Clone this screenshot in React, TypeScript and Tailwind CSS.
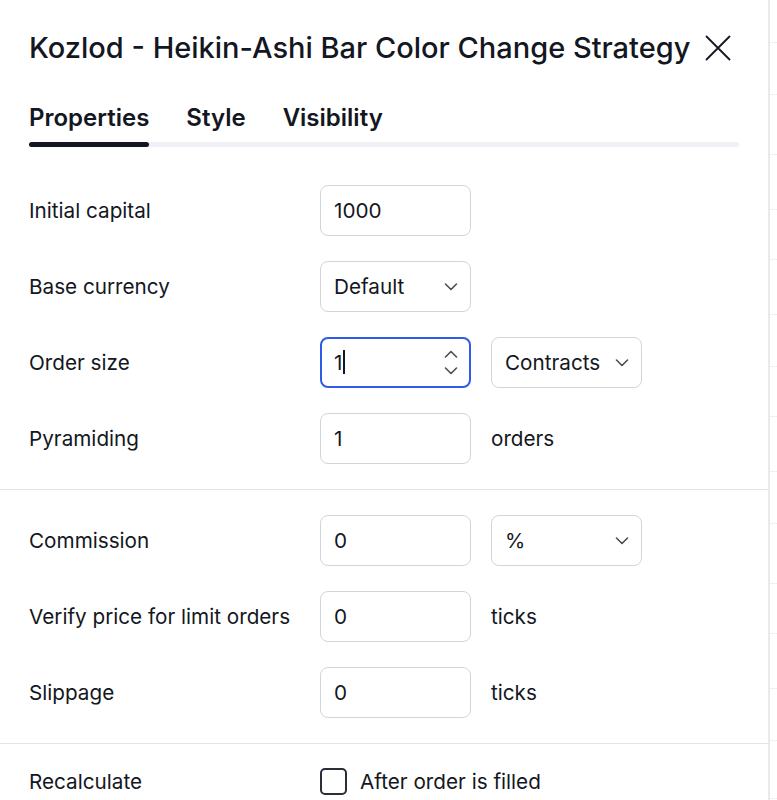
import React from "react";

const Chevron = ({ up = false }: { up?: boolean }) => (
  <svg width="14" height="8" viewBox="0 0 14 8" fill="none">
    <path
      d={up ? "M1.5 7L7 1.5L12.5 7" : "M1.5 1L7 6.5L12.5 1"}
      stroke="#4a4e59"
      strokeWidth="1.6"
      strokeLinecap="round"
      strokeLinejoin="round"
    />
  </svg>
);

const Row = ({ label, children }: { label: string; children: React.ReactNode }) => (
  <div className="flex items-center h-[51px]">
    <div className="w-[291px] text-[20.7px] text-[#131722]">{label}</div>
    <div className="flex items-center gap-[20px]">{children}</div>
  </div>
);

const Input = ({ value }: { value: string }) => (
  <div className="w-[151px] h-[51px] rounded-[8px] border border-[#d1d4dc] flex items-center px-[13px] text-[20.7px] text-[#131722]">
    {value}
  </div>
);

const Select = ({ value }: { value: string }) => (
  <div className="w-[151px] h-[51px] rounded-[8px] border border-[#d1d4dc] flex items-center justify-between pl-[13px] pr-[12px] text-[20.7px] text-[#131722]">
    <span>{value}</span>
    <Chevron />
  </div>
);

const Unit = ({ text }: { text: string }) => (
  <span className="text-[20.7px] text-[#131722]">{text}</span>
);

export default function App() {
  const lines = [43, 52, 60, 55, 50, 55, 52, 50, 55, 52, 60, 50, 55, 52, 58];
  return (
    <div
      className="w-[777px] h-[800px] flex bg-white overflow-hidden"
      style={{ fontFamily: "Inter, 'Noto Sans', sans-serif" }}
    >
      <div className="w-[770px] shrink-0 border-r-2 border-[#e9eaee] flex flex-col">
        <div className="pl-[29px] pr-[37px] pt-[28px] flex items-center justify-between">
          <h1 className="text-[29px] leading-[40px] font-medium text-[#131722]">
            Kozlod - Heikin-Ashi Bar Color Change Strategy
          </h1>
          <svg width="26" height="26" viewBox="0 0 26 26" fill="none">
            <path d="M1.5 1.5L24.5 24.5M24.5 1.5L1.5 24.5" stroke="#131722" strokeWidth="1.8" strokeLinecap="round" />
          </svg>
        </div>

        <div className="pl-[29px] pr-[29px] mt-[35px]">
          <div className="flex gap-[37px] text-[24px] leading-[30px] font-semibold text-[#131722]">
            <span>Properties</span>
            <span>Style</span>
            <span>Visibility</span>
          </div>
          <div className="mt-[9px] h-[5px] rounded-full bg-[#f0f1f7] flex">
            <div className="w-[120px] h-[5px] rounded-full bg-[#131722]" />
          </div>
        </div>

        <div className="pl-[29px] mt-[38px] flex flex-col gap-[25px]">
          <Row label="Initial capital">
            <Input value="1000" />
          </Row>
          <Row label="Base currency">
            <Select value="Default" />
          </Row>
          <Row label="Order size">
            <div className="w-[151px] h-[51px] rounded-[8px] border-2 border-[#2f5be6] flex items-center justify-between pl-[12px] pr-[11px] text-[20.7px] text-[#131722]">
              <span className="flex items-center">
                1<span className="inline-block w-[1.5px] h-[24px] bg-[#131722] ml-[1px]" />
              </span>
              <div className="flex flex-col gap-[9px]">
                <Chevron up />
                <Chevron />
              </div>
            </div>
            <Select value="Contracts" />
          </Row>
          <Row label="Pyramiding">
            <Input value="1" />
            <Unit text="orders" />
          </Row>
        </div>

        <div className="mt-[25px] h-px bg-[#e0e3eb]" />

        <div className="pl-[29px] mt-[25px] flex flex-col gap-[25px]">
          <Row label="Commission">
            <Input value="0" />
            <Select value="%" />
          </Row>
          <Row label="Verify price for limit orders">
            <Input value="0" />
            <Unit text="ticks" />
          </Row>
          <Row label="Slippage">
            <Input value="0" />
            <Unit text="ticks" />
          </Row>
        </div>

        <div className="mt-[25px] h-px bg-[#e0e3eb]" />

        <div className="pl-[29px] mt-[24px] flex items-center h-[27px]">
          <div className="w-[291px] text-[20.7px] text-[#131722]">Recalculate</div>
          <div className="flex items-center gap-[13px]">
            <div className="w-[27px] h-[27px] rounded-[5px] border-2 border-[#2a2e39]" />
            <span className="text-[20.7px] text-[#131722]">After order is filled</span>
          </div>
        </div>
      </div>
      <div className="flex-1 flex flex-col">
        {lines.map((h, i) => (
          <div key={i} className="border-b border-[#eeeff2]" style={{ height: h }} />
        ))}
      </div>
    </div>
  );
}
